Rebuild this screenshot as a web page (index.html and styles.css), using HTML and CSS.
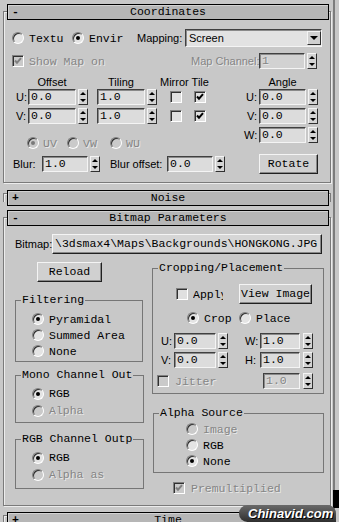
FILE: index.html
```html
<!DOCTYPE html>
<html lang="en">

<head>
    <meta charset="UTF-8">
    <meta name="viewport" content="width=device-width, initial-scale=1.0">
    <title>Bitmap Parameters</title>
    <link rel="stylesheet" href="styles.css">
</head>

<body>
    <div class="panel">
        <div class="rollouts">

            <section class="rollout coords">
                <div class="roll-head"><span class="toggle">-</span><span>Coordinates</span><span></span></div>

                <div class="row map-row">
                    <label class="opt opt-tex"><span class="radio"></span>Textu</label>
                    <label class="opt opt-env"><span class="radio on"></span>Envir</label>
                    <span class="lbl lbl-mapping">Mapping:</span>
                    <div class="select"><span>Screen</span><span class="drop"></span></div>
                </div>

                <div class="row show-row">
                    <label class="opt opt-show off"><span class="check"><svg class="tick" viewBox="0 0 8 8"><path d="M1 3.5l2 2.2L7 1.2"/></svg></span>Show Map on</label>
                    <span class="lbl lbl-channel off">Map Channel:</span>
                    <span class="field f-channel off">1</span><span class="spin"></span>
                </div>

                <div class="xform">
                    <div class="xf-left">
                        <div class="row heads heads-left">
                            <span class="lbl col-head">Offset</span>
                            <span class="lbl col-head head-tiling">Tiling</span>
                            <span class="lbl head-mirror">Mirror Tile</span>
                        </div>
                        <div class="row uv-row">
                            <span class="lbl axis-lbl">U:</span>
                            <span class="field f-offset">0.0</span><span class="spin"></span>
                            <span class="field f-tiling">1.0</span><span class="spin"></span>
                            <span class="check mirror"></span>
                            <span class="check tile"><svg class="tick" viewBox="0 0 8 8"><path d="M1 3.5l2 2.2L7 1.2"/></svg></span>
                        </div>
                        <div class="row uv-row">
                            <span class="lbl axis-lbl">V:</span>
                            <span class="field f-offset">0.0</span><span class="spin"></span>
                            <span class="field f-tiling">1.0</span><span class="spin"></span>
                            <span class="check mirror"></span>
                            <span class="check tile"><svg class="tick" viewBox="0 0 8 8"><path d="M1 3.5l2 2.2L7 1.2"/></svg></span>
                        </div>
                        <div class="row axis-row off">
                            <label class="opt opt-uv"><span class="radio on"></span>UV</label>
                            <label class="opt opt-vw"><span class="radio"></span>VW</label>
                            <label class="opt"><span class="radio"></span>WU</label>
                        </div>
                    </div>

                    <div class="xf-angle">
                        <div class="row heads heads-angle">
                            <span class="lbl head-angle">Angle</span>
                        </div>
                        <div class="row angle-row">
                            <span class="lbl angle-lbl">U:</span>
                            <span class="field f-angle">0.0</span><span class="spin"></span>
                        </div>
                        <div class="row angle-row">
                            <span class="lbl angle-lbl">V:</span>
                            <span class="field f-angle">0.0</span><span class="spin"></span>
                        </div>
                        <div class="row angle-row">
                            <span class="lbl angle-lbl">W:</span>
                            <span class="field f-angle">0.0</span><span class="spin"></span>
                        </div>
                    </div>
                </div>

                <div class="row blur-row">
                    <span class="lbl lbl-blur">Blur:</span>
                    <span class="field f-blur">1.0</span><span class="spin"></span>
                    <span class="lbl lbl-bluroff">Blur offset:</span>
                    <span class="field f-blur">0.0</span><span class="spin"></span>
                    <span class="btn btn-rotate">Rotate</span>
                </div>
            </section>

            <section class="rollout closed noise">
                <div class="roll-head"><span class="toggle">+</span><span>Noise</span><span></span></div>
            </section>

            <section class="rollout bitmap">
                <div class="roll-head"><span class="toggle">-</span><span>Bitmap Parameters</span><span></span></div>

                <div class="row path-row">
                    <span class="lbl lbl-bitmap">Bitmap:</span>
                    <span class="btn btn-path">\3dsmax4\Maps\Backgrounds\HONGKONG.JPG</span>
                </div>

                <div class="bm-cols">
                    <div class="bm-left">
                        <span class="btn btn-reload">Reload</span>

                        <div class="group g-filter">
                            <span class="group-title">Filtering</span>
                            <label class="opt"><span class="radio on"></span>Pyramidal</label>
                            <label class="opt"><span class="radio"></span>Summed Area</label>
                            <label class="opt"><span class="radio"></span>None</label>
                        </div>

                        <div class="group g-mono">
                            <span class="group-title">Mono Channel Out</span>
                            <label class="opt"><span class="radio on"></span>RGB</label>
                            <label class="opt off"><span class="radio"></span>Alpha</label>
                        </div>

                        <div class="group g-rgb">
                            <span class="group-title">RGB Channel Outp</span>
                            <label class="opt"><span class="radio on"></span>RGB</label>
                            <label class="opt off"><span class="radio"></span>Alpha as</label>
                        </div>
                    </div>

                    <div class="bm-right">
                        <div class="group g-crop">
                            <span class="group-title">Cropping/Placement</span>
                            <div class="row apply-row">
                                <span class="check"></span>
                                <span class="apply-txt">Apply</span>
                                <span class="btn btn-view">View Image</span>
                            </div>
                            <div class="row crop-row">
                                <label class="opt opt-crop"><span class="radio on"></span>Crop</label>
                                <label class="opt"><span class="radio"></span>Place</label>
                            </div>
                            <div class="row cw-row">
                                <span class="lbl lbl-u">U:</span>
                                <span class="field f-crop">0.0</span><span class="spin"></span>
                                <span class="lbl lbl-w">W:</span>
                                <span class="field f-size">1.0</span><span class="spin gap3"></span>
                            </div>
                            <div class="row cw-row">
                                <span class="lbl lbl-u">V:</span>
                                <span class="field f-crop">0.0</span><span class="spin"></span>
                                <span class="lbl lbl-w">H:</span>
                                <span class="field f-size">1.0</span><span class="spin gap3"></span>
                            </div>
                            <div class="row jitter-row">
                                <label class="opt opt-jitter off"><span class="check"></span>Jitter</label>
                                <span class="field f-jitter off">1.0</span><span class="spin gap3"></span>
                            </div>
                        </div>

                        <div class="group g-alpha">
                            <span class="group-title">Alpha Source</span>
                            <label class="opt off"><span class="radio"></span>Image</label>
                            <label class="opt"><span class="radio"></span>RGB</label>
                            <label class="opt"><span class="radio on"></span>None</label>
                        </div>

                        <label class="opt opt-premult off"><span class="check"><svg class="tick" viewBox="0 0 8 8"><path d="M1 3.5l2 2.2L7 1.2"/></svg></span>Premultiplied</label>
                    </div>
                </div>
            </section>

            <section class="rollout closed time">
                <div class="roll-head"><span class="toggle">+</span><span>Time</span><span></span></div>
            </section>
        </div>

        <div class="track"><div class="thumb"></div></div>
    </div>

    <div class="watermark">Chinavid.com</div>
</body>

</html>
```

FILE: styles.css
```css
* {
    box-sizing: border-box;
}

body {
    margin: 0;
    width: 339px;
    height: 522px;
    overflow: hidden;
    position: relative;
    background-color: #c8c8c8;
    color: #000;
    font-family: "Liberation Sans", Arial, sans-serif;
    font-size: 11px;
}

.panel {
    display: flex;
    align-items: flex-start;
}

.rollouts {
    flex: none;
    width: 331px;
}

/* rollout frames */
.rollout {
    margin-left: 3px;
    width: 328px;
    border: 1px solid #7a7a7a;
    box-shadow: inset 1px 1px 0 #ececec, 1px 1px 0 #ececec;
}

.coords {
    margin-top: 11px;
    padding-bottom: 8px;
}

.closed {
    height: 9px;
    border-bottom: none;
    box-shadow: inset 1px 1px 0 #ececec;
}

.noise {
    margin-top: 10px;
}

.bitmap {
    margin-top: 15px;
    padding-bottom: 11px;
}

.time {
    margin-top: 9px;
}

.roll-head {
    display: grid;
    grid-template-columns: 1fr auto 1fr;
    align-items: center;
    height: 16px;
    margin: -8px 1px 0 3px;
    background-color: #b6b6b6;
    border: 1px solid #000;
    box-shadow: inset 1px 1px 0 #d2d2d2;
    font-family: "Liberation Mono", monospace;
    font-size: 11.5px;
    line-height: 14px;
}

.closed .roll-head {
    margin-top: -4px;
}

.toggle {
    padding-left: 4px;
    font-weight: bold;
}

/* generic controls */
.row {
    display: flex;
    align-items: center;
}

.lbl {
    flex: none;
    white-space: nowrap;
}

.off {
    color: #858585;
    text-shadow: 1px 1px 0 #e8e8e8;
}

.opt {
    flex: none;
    display: flex;
    align-items: center;
    gap: 5px;
    font-family: "Liberation Mono", monospace;
    font-size: 11.5px;
    white-space: nowrap;
}

.field {
    flex: none;
    height: 16px;
    padding: 0 2px;
    background-color: #dcdcdc;
    border: 1px solid;
    border-color: #404040 #f4f4f4 #f4f4f4 #404040;
    box-shadow: inset 1px 1px 0 #8a8a8a;
    font-family: "Liberation Mono", monospace;
    font-size: 11.5px;
    line-height: 14px;
    white-space: nowrap;
    overflow: hidden;
}

.spin {
    flex: none;
    position: relative;
    width: 10px;
    height: 16px;
    margin-left: 2px;
    background-color: #d4d4d4;
    border: 1px solid;
    border-color: #f4f4f4 #303030 #303030 #f4f4f4;
}

.spin.gap3 {
    margin-left: 3px;
}

.spin::before,
.spin::after {
    content: "";
    position: absolute;
    left: 1px;
    border-left: 3px solid transparent;
    border-right: 3px solid transparent;
}

.spin::before {
    top: 2px;
    border-bottom: 3px solid #000;
}

.spin::after {
    bottom: 2px;
    border-top: 3px solid #000;
}

.radio {
    flex: none;
    position: relative;
    width: 12px;
    height: 12px;
    border-radius: 50%;
    background-color: #e4e4e4;
    border: 1px solid;
    border-color: #808080 #fff #fff #808080;
    box-shadow: inset 1px 1px 0 #303030;
}

.radio.on::after {
    content: "";
    position: absolute;
    left: 3px;
    top: 3px;
    width: 4px;
    height: 4px;
    border-radius: 50%;
    background-color: #000;
}

.off .radio {
    background-color: #cacaca;
}

.off .radio.on::after {
    background-color: #7a7a7a;
}

.check {
    flex: none;
    display: flex;
    align-items: center;
    justify-content: center;
    width: 12px;
    height: 12px;
    background-color: #e0e0e0;
    border: 1px solid;
    border-color: #808080 #fff #fff #808080;
    box-shadow: inset 1px 1px 0 #303030;
}

.off .check {
    background-color: #cacaca;
}

.tick {
    display: block;
    width: 8px;
    height: 8px;
    fill: none;
    stroke: #000;
    stroke-width: 2;
}

.off .tick {
    stroke: #808080;
}

.btn {
    flex: none;
    display: block;
    height: 20px;
    background-color: #d0d0d0;
    border: 1px solid;
    border-color: #f4f4f4 #202020 #202020 #f4f4f4;
    box-shadow: inset -1px -1px 0 #888;
    font-family: "Liberation Mono", monospace;
    font-size: 11.5px;
    line-height: 18px;
    text-align: center;
    white-space: nowrap;
    overflow: hidden;
}

.select {
    flex: none;
    display: flex;
    align-items: center;
    justify-content: space-between;
    width: 137px;
    height: 18px;
    padding-left: 3px;
    background-color: #e2e2e2;
    border: 1px solid;
    border-color: #404040 #f4f4f4 #f4f4f4 #404040;
    box-shadow: inset 1px 1px 0 #8a8a8a;
}

.drop {
    position: relative;
    width: 14px;
    height: 14px;
    background-color: #d0d0d0;
    border: 1px solid;
    border-color: #f4f4f4 #303030 #303030 #f4f4f4;
}

.drop::after {
    content: "";
    position: absolute;
    left: 2px;
    top: 4px;
    border-left: 4px solid transparent;
    border-right: 4px solid transparent;
    border-top: 4px solid #000;
}

/* coordinates rollout */
.map-row {
    margin-top: 9px;
    height: 18px;
    padding-left: 8px;
}

.opt-tex {
    width: 60px;
}

.opt-env {
    width: 65px;
}

.lbl-mapping {
    width: 48px;
}

.show-row {
    margin-top: 6px;
    height: 16px;
    padding-left: 8px;
}

.opt-show {
    width: 179px;
}

.lbl-channel {
    width: 68px;
}

.f-channel {
    width: 46px;
    background-color: #d2d2d2;
}

.xform {
    display: flex;
    align-items: flex-start;
    margin-top: 7px;
}

.xf-left {
    width: 240px;
}

.xf-angle {
    width: 86px;
}

.heads {
    height: 12px;
}

.heads-left {
    padding-left: 24px;
}

.col-head {
    width: 48px;
    text-align: center;
}

.head-tiling {
    margin-left: 21px;
}

.head-mirror {
    margin-left: 15px;
}

.heads-angle {
    padding-left: 15px;
}

.head-angle {
    width: 47px;
    text-align: center;
}

.uv-row,
.angle-row {
    height: 16px;
    margin-top: 3px;
}

.heads + .uv-row,
.heads + .angle-row {
    margin-top: 1px;
}

.uv-row {
    padding-left: 12px;
}

.axis-lbl {
    width: 12px;
}

.f-offset,
.f-tiling {
    width: 48px;
}

.f-tiling {
    margin-left: 9px;
}

.mirror {
    margin-left: 13px;
}

.tile {
    margin-left: 12px;
}

.axis-row {
    margin-top: 13px;
    height: 12px;
    padding-left: 23px;
}

.axis-row .opt {
    gap: 4px;
}

.opt-uv {
    width: 40px;
}

.opt-vw {
    width: 43px;
}

.angle-lbl {
    width: 15px;
    padding-right: 2px;
    text-align: right;
}

.f-angle {
    width: 47px;
}

.blur-row {
    margin-top: 5px;
    height: 20px;
    padding-left: 9px;
}

.lbl-blur {
    width: 29px;
}

.f-blur {
    width: 46px;
}

.lbl-bluroff {
    width: 57px;
    margin-left: 10px;
}

.btn-rotate {
    width: 59px;
    margin-left: 34px;
}

/* bitmap rollout */
.path-row {
    margin-top: 8px;
    height: 20px;
    padding-left: 11px;
}

.lbl-bitmap {
    width: 37px;
}

.btn-path {
    width: 270px;
    padding-left: 2px;
    text-align: left;
    background-color: #d6d6d6;
}

.bm-cols {
    display: flex;
    align-items: flex-start;
    margin-top: 8px;
}

.bm-left {
    flex: none;
    width: 148px;
}

.bm-right {
    flex: none;
    width: 172px;
}

.btn-reload {
    width: 65px;
    margin-left: 33px;
}

/* group boxes: title sits on the top line */
.group {
    border: 1px solid #767676;
}

.group-title {
    display: table;
    margin: -7px 0 0 5px;
    padding: 0 1px;
    background-color: #c8c8c8;
    font-family: "Liberation Mono", monospace;
    font-size: 11.5px;
    line-height: 12px;
    white-space: nowrap;
}

.group .opt {
    height: 17px;
    margin-left: 16px;
}

.g-filter {
    width: 128px;
    margin: 18px 0 0 11px;
    padding-bottom: 2px;
}

.g-filter .group-title {
    margin-bottom: 5px;
}

.g-filter .opt {
    height: 16px;
}

.g-mono {
    width: 129px;
    margin: 13px 0 0 11px;
    padding-bottom: 3px;
}

.g-mono .group-title,
.g-rgb .group-title {
    margin-bottom: 4px;
}

.g-rgb {
    width: 129px;
    margin: 16px 0 0 11px;
    padding-bottom: 5px;
}

.g-crop {
    width: 172px;
    margin-top: 6px;
    padding-bottom: 4px;
}

.g-crop .group-title {
    margin-bottom: 10px;
}

.apply-row {
    height: 20px;
    padding-left: 23px;
}

.apply-txt {
    flex: none;
    width: 30px;
    margin-left: 5px;
    overflow: hidden;
    font-family: "Liberation Mono", monospace;
    font-size: 11.5px;
    white-space: nowrap;
}

.btn-view {
    width: 73px;
    margin-left: 16px;
}

.crop-row {
    margin-top: 8px;
    height: 12px;
    padding-left: 34px;
}

.group .crop-row .opt {
    height: 12px;
    margin-left: 0;
}

.opt-crop {
    width: 52px;
}

.cw-row {
    margin-top: 3px;
    height: 16px;
    padding-left: 8px;
}

.crop-row + .cw-row {
    margin-top: 9px;
}

.lbl-u {
    width: 13px;
}

.f-crop {
    width: 42px;
}

.lbl-w {
    width: 15px;
    margin-left: 17px;
}

.f-size {
    width: 40px;
}

.jitter-row {
    margin-top: 5px;
    height: 16px;
    padding-left: 4px;
}

.group .opt-jitter {
    width: 106px;
    height: 16px;
    margin-left: 0;
    gap: 6px;
}

.f-jitter {
    width: 37px;
    background-color: #d2d2d2;
}

.g-alpha {
    width: 171px;
    margin: 19px 0 0 1px;
    padding-bottom: 3px;
}

.g-alpha .group-title {
    margin-bottom: 2px;
}

.g-alpha .opt {
    height: 16px;
    margin-left: 32px;
}

.opt-premult {
    margin: 9px 0 0 21px;
    height: 12px;
    gap: 6px;
}

/* command panel scroll strip */
.track {
    flex: none;
    width: 2px;
    height: 522px;
    margin-left: 2px;
    background-color: #7c7c7c;
}

.thumb {
    width: 6px;
    height: 18px;
    margin-top: 490px;
    background-color: #000;
}

.watermark {
    position: absolute;
    right: 3px;
    bottom: 0;
    width: 97px;
    height: 17px;
    padding-left: 9px;
    border-radius: 9px 9px 0 9px;
    background: linear-gradient(#6a6a6a, #2e2e2e);
    color: #fff;
    font-family: "Liberation Sans", Arial, sans-serif;
    font-size: 13px;
    font-weight: bold;
    font-style: italic;
    line-height: 17px;
    text-shadow: 1px 1px 0 #000;
}
```
